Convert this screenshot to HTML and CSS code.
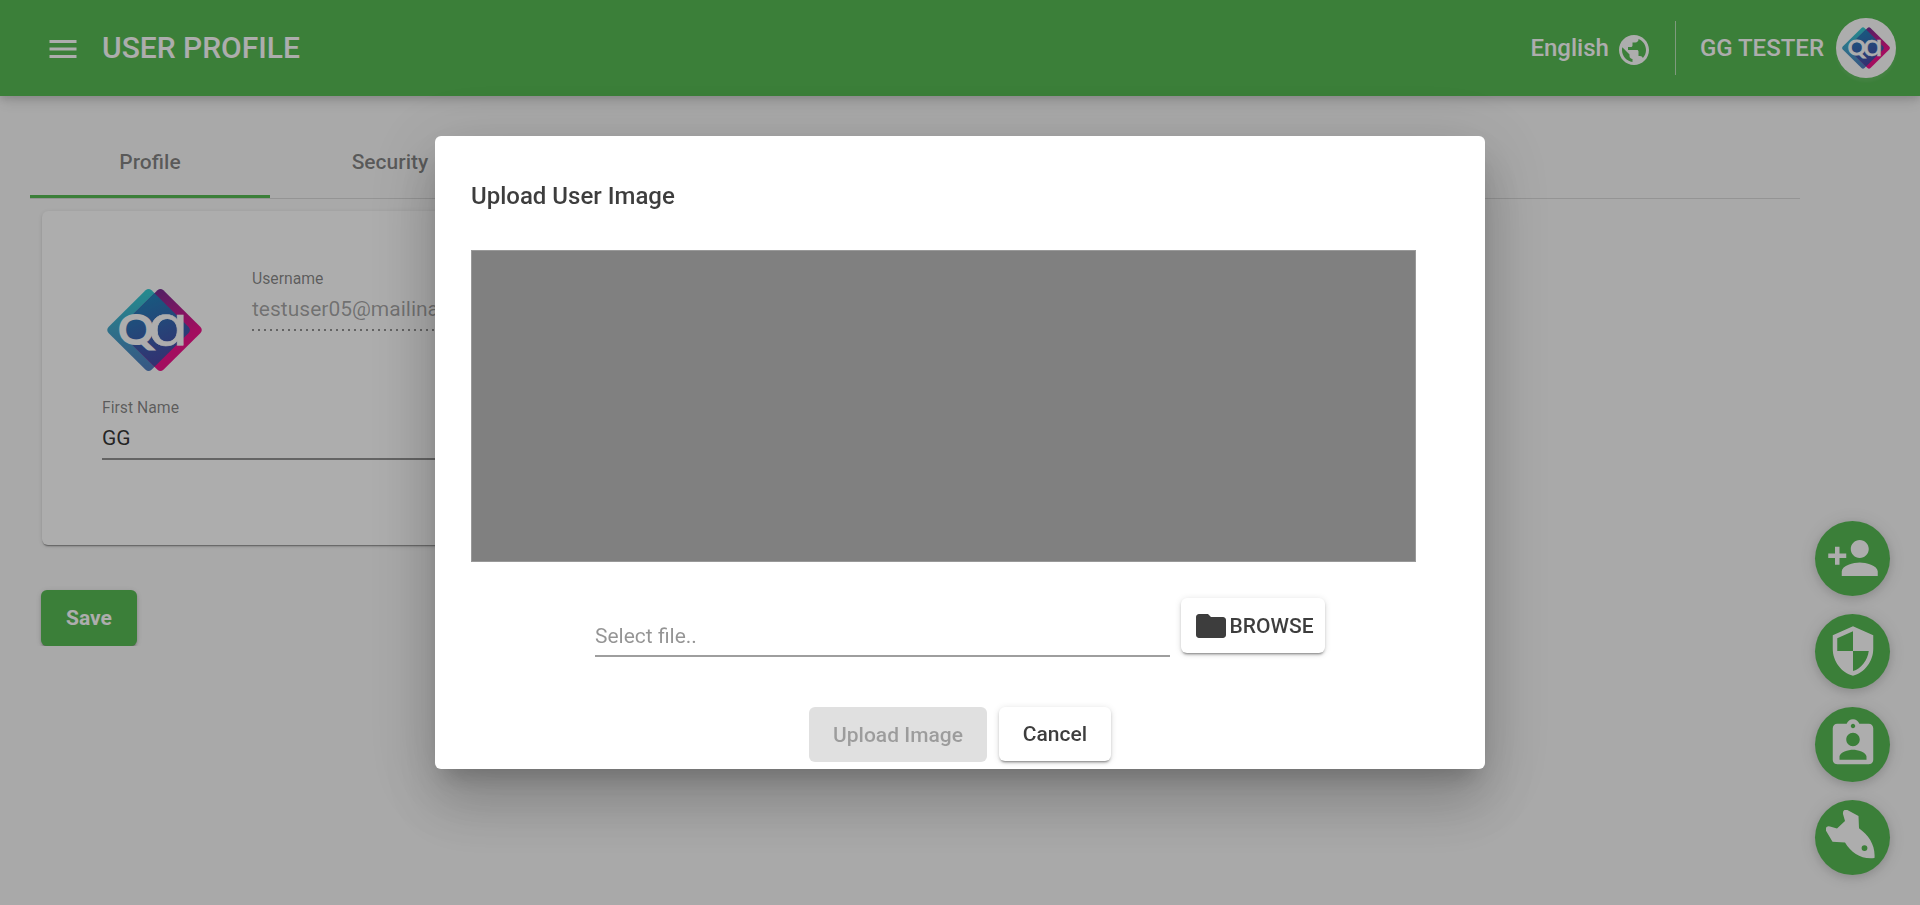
FILE: index.html
```html
<!DOCTYPE html>
<html lang="en">
<head>
<meta charset="utf-8">
<title>User Profile</title>
<link rel="stylesheet" href="styles.css">
</head>
<body>
<svg class="defs" width="0" height="0" aria-hidden="true">
  <defs>
    <linearGradient id="teal" x1="0" y1="0" x2="0" y2="1"><stop offset="0" stop-color="#36cdd3"/><stop offset="1" stop-color="#527fc2"/></linearGradient>
    <linearGradient id="pink" x1="0.2" y1="0" x2="0.6" y2="0.7"><stop offset="0" stop-color="#5f3596"/><stop offset="1" stop-color="#f0148c"/></linearGradient>
    <linearGradient id="blue" x1="0" y1="0" x2="0.4" y2="1"><stop offset="0" stop-color="#1c8fc0"/><stop offset="1" stop-color="#4a4aa8"/></linearGradient>
    <symbol id="logo" viewBox="0 0 96 84">
      <path fill="url(#teal)" d="M39 1.800Q42-.8 45 1.800L82.500 39Q85 42 82.500 45L45 82.200Q42 84.800 39 82.200L1.500 45Q-1 42 1.500 39Z"/>
      <path fill="url(#pink)" d="M51 1.800Q54-.8 57 1.800L94.500 39Q97 42 94.500 45L57 82.200Q54 84.800 51 82.200L13.500 45Q11 42 13.500 39Z"/>
      <path fill="url(#blue)" d="M48 4.800L82.500 39Q85 42 82.500 45L48 79.200L13.500 45Q11 42 13.500 39Z"/>
      <text class="logo-q" x="11.500" y="56.500" textLength="36" lengthAdjust="spacingAndGlyphs">Q</text>
      <text class="logo-a" x="41" y="57" textLength="42" lengthAdjust="spacingAndGlyphs">ɑ</text>
    </symbol>
  </defs>
</svg>

<header class="topbar">
  <svg class="icon" viewBox="0 0 24 24"><path d="M3 18h18v-2H3v2zm0-5h18v-2H3v2zm0-7v2h18V6H3z"/></svg>
  <h1 class="topbar-title">USER PROFILE</h1>
  <div class="language">
    <span>English</span>
    <svg class="icon" viewBox="0 0 24 24"><path d="M12 2C6.480 2 2 6.480 2 12s4.480 10 10 10 10-4.480 10-10S17.520 2 12 2zm-1 17.930c-3.950-.49-7-3.850-7-7.930 0-.62.080-1.210.210-1.790L9 15v1c0 1.100.9 2 2 2v1.930zm6.900-2.540c-.26-.81-1-1.390-1.900-1.390h-1v-3c0-.55-.45-1-1-1H8v-2h2c.55 0 1-.45 1-1V7h2c1.100 0 2-.9 2-2v-.41c2.930 1.190 5 4.060 5 7.410 0 2.080-.8 3.970-2.100 5.390z"/></svg>
  </div>
  <div class="account">
    <span>GG TESTER</span>
    <span class="avatar"><svg viewBox="0 0 96 84"><use href="#logo"/></svg></span>
  </div>
</header>

<main class="content">
  <nav class="tabs">
    <a class="tab tab-active">Profile</a>
    <a class="tab">Security</a>
  </nav>
  <section class="card">
    <div class="card-head">
      <svg class="photo" viewBox="0 0 96 84"><use href="#logo"/></svg>
      <div class="field">
        <span class="label">Username</span>
        <span class="value value-disabled">testuser05@mailinator.com</span>
      </div>
    </div>
    <div class="field">
      <span class="label">First Name</span>
      <span class="value">GG</span>
    </div>
  </section>
  <div class="save-row"><button class="button save">Save</button></div>
</main>

<aside class="fabs">
  <button class="fab"><svg viewBox="0 0 24 24"><path d="M15 12c2.210 0 4-1.790 4-4s-1.790-4-4-4-4 1.790-4 4 1.790 4 4 4zm-9-2V7H4v3H1v2h3v3h2v-3h3v-2H6zm9 4c-2.670 0-8 1.340-8 4v2h16v-2c0-2.660-5.330-4-8-4z"/></svg></button>
  <button class="fab"><svg viewBox="0 0 24 24"><path d="M12 1L3 5v6c0 5.550 3.840 10.740 9 12 5.160-1.260 9-6.450 9-12V5l-9-4zm0 10.990h7c-.53 4.120-3.280 7.790-7 8.940V12H5V6.300l7-3.110v8.800z"/></svg></button>
  <button class="fab"><svg viewBox="0 0 24 24"><path d="M19 3h-4.180C14.400 1.840 13.300 1 12 1c-1.300 0-2.400.84-2.820 2H5c-1.100 0-2 .9-2 2v14c0 1.100.9 2 2 2h14c1.100 0 2-.9 2-2V5c0-1.100-.9-2-2-2zm-7 0c.55 0 1 .45 1 1s-.45 1-1 1-1-.45-1-1 .45-1 1-1zm0 4c1.660 0 3 1.340 3 3s-1.340 3-3 3-3-1.340-3-3 1.340-3 3-3zm6 12H6v-1.400c0-2 4-3.100 6-3.100s6 1.100 6 3.100V19z"/></svg></button>
  <button class="fab"><svg viewBox="0 0 54 54"><path fill-rule="evenodd" d="M17 4Q16.500-.8 21-.2L32.500 6 33 18.300C43 25.500 49.500 35.500 48.500 48 35.500 49.500 25.500 43.500 19 32.500L6.500 31.800-.2 20.500Q-.8 15.500 4 16.500L11 18.500 19 11ZM38.500 35.200a2.900 2.900 0 1 0 0 5.800 2.900 2.900 0 1 0 0-5.800Z"/></svg></button>
</aside>

<div class="backdrop">
  <section class="dialog" role="dialog">
    <h2 class="dialog-title">Upload User Image</h2>
    <div class="preview"></div>
    <div class="file-row">
      <div class="file-input">Select file..</div>
      <button class="button browse"><svg class="icon" viewBox="0 0 24 24"><path d="M10 4H4c-1.100 0-1.990.9-1.990 2L2 18c0 1.100.9 2 2 2h16c1.100 0 2-.9 2-2V8c0-1.100-.9-2-2-2h-8l-2-2z"/></svg>BROWSE</button>
    </div>
    <div class="actions">
      <button class="button upload" disabled>Upload Image</button>
      <button class="button cancel">Cancel</button>
    </div>
  </section>
</div>
</body>
</html>
```
FILE: styles.css
```css
* { box-sizing: border-box; }
html, body { height: 100%; }
body {
  margin: 0;
  overflow: hidden;
  background: #fafafa;
  color: rgba(0, 0, 0, .8);
  font-family: Roboto, "Liberation Sans", sans-serif;
  font-size: 21px;
}
.defs { position: absolute; }
svg { display: block; fill: currentColor; flex: none; }
.icon { width: 36px; height: 36px; }
.logo-q, .logo-a { fill: #fff; stroke: #fff; }
.logo-q { font: 400 41px Lato, sans-serif; stroke-width: 2.2px; }
.logo-a { font: 400 56px "DejaVu Sans", sans-serif; stroke-width: .6px; }

.topbar {
  position: relative;
  display: flex;
  align-items: center;
  height: 96px;
  padding: 0 24px 0 45px;
  background: #57bb54;
  color: #fff;
  font-size: 24px;
  font-weight: 500;
  box-shadow: 0 3px 7px rgba(0, 0, 0, .12), 0 6px 15px rgba(0, 0, 0, .1);
}
.topbar > .icon { margin-top: 2px; }
.topbar-title { margin: 0 auto 2px 21px; font-size: 30px; font-weight: 500; }
.language {
  display: flex;
  align-items: center;
  gap: 8px;
  height: 54px;
  padding-right: 23px;
  border-right: 1px solid rgba(255, 255, 255, .6);
}
.language .icon { margin-top: 4px; }
.account { display: flex; align-items: center; gap: 12px; padding-left: 24px; }
.language span { margin-right: -1px; }
.avatar {
  display: grid;
  place-items: center;
  width: 60px;
  height: 60px;
  border-radius: 50%;
  background: #fff;
  box-shadow: 0 4px 3px rgba(255, 255, 255, .08);
}
.avatar svg { width: 48px; height: 42px; }

.content { padding: 30px 120px 0 30px; }
.tabs { display: flex; height: 73px; border-bottom: 1px solid rgba(0, 0, 0, .12); }
.tab {
  width: 240px;
  height: 72px;
  line-height: 72px;
  text-align: center;
  font-weight: 500;
  color: rgba(0, 0, 0, .48);
}
.tab-active { border-bottom: 3px solid #57bb54; }
.card {
  width: 1100px;
  height: 334px;
  margin: 12px 0 0 12px;
  padding: 60px;
  border-radius: 6px;
  background: #fff;
  box-shadow: 0 3px 2px -2px rgba(0, 0, 0, .3), 0 1px 1px rgba(0, 0, 0, .16), 0 1px 5px rgba(0, 0, 0, .12);
}
.card-head { display: flex; height: 129px; }
.photo { width: 95px; height: 84px; margin: 17px 50px 0 5px; }
.field { display: flex; flex-direction: column; flex: 1; }
.label { height: 22px; line-height: 16px; font-size: 15.750px; color: rgba(0, 0, 0, .48); }
.value { height: 38px; line-height: 32px; border-bottom: 2px solid rgba(0, 0, 0, .42); }
.value-disabled {
  color: rgba(0, 0, 0, .36);
  border-bottom: 0;
  background: repeating-linear-gradient(to right, rgba(0, 0, 0, .42) 0 2px, transparent 2px 6px) bottom / 100% 2px no-repeat;
}
.save-row { width: 250px; height: 70px; margin: 31px 0 0 -3px; padding: 14px; overflow: hidden; }

.button {
  display: flex;
  align-items: center;
  justify-content: center;
  height: 55px;
  padding: 0;
  border: 0;
  border-radius: 6px;
  background: #fff;
  color: rgba(0, 0, 0, .76);
  font: 500 21px Roboto, sans-serif;
  box-shadow: 0 3px 2px -2px rgba(0, 0, 0, .3), 0 2px 3px rgba(0, 0, 0, .16), 0 1px 7px rgba(0, 0, 0, .12);
}
.save { width: 96px; height: 56px; background: #57bb54; color: #fff; font-weight: 700; }

.fabs { position: fixed; right: 30px; top: 521px; display: grid; gap: 18px; }
.fab {
  display: grid;
  place-items: center;
  width: 75px;
  height: 75px;
  padding: 0 0 2px;
  border: 0;
  border-radius: 50%;
  background: #57bb54;
  color: #fff;
  box-shadow: 0 3px 12px rgba(0, 0, 0, .14), 0 1px 22px rgba(0, 0, 0, .1);
}
.fab svg { width: 54px; height: 54px; }

.backdrop {
  position: fixed;
  inset: 0;
  display: grid;
  place-items: center;
  background: rgba(0, 0, 0, .32);
}
.dialog {
  width: 1050px;
  height: 633px;
  padding: 36px;
  border-radius: 6px;
  background: #fff;
  box-shadow: 0 16px 22px -10px rgba(0, 0, 0, .2), 0 36px 57px 4px rgba(0, 0, 0, .14), 0 13px 69px 12px rgba(0, 0, 0, .12);
}
.dialog-title { height: 78px; margin: 0; line-height: 48px; font-size: 24px; font-weight: 500; color: rgba(0, 0, 0, .76); }
.preview { width: 945px; height: 312px; border: 1px solid #999; background: #808080; }
.file-row { display: flex; gap: 11px; padding: 36px 0 0 124px; }
.file-input {
  width: 575px;
  height: 59px;
  padding-top: 22px;
  line-height: 32px;
  color: rgba(0, 0, 0, .42);
  border-bottom: 2px solid rgba(0, 0, 0, .38);
}
.browse { width: 144px; padding-left: 1px; }
.actions { display: flex; gap: 12px; padding: 50px 0 0 338px; }
.upload { width: 178px; background: #e0e0e0; color: rgba(0, 0, 0, .3); box-shadow: none; }
.cancel { width: 112px; height: 54px; }
```
